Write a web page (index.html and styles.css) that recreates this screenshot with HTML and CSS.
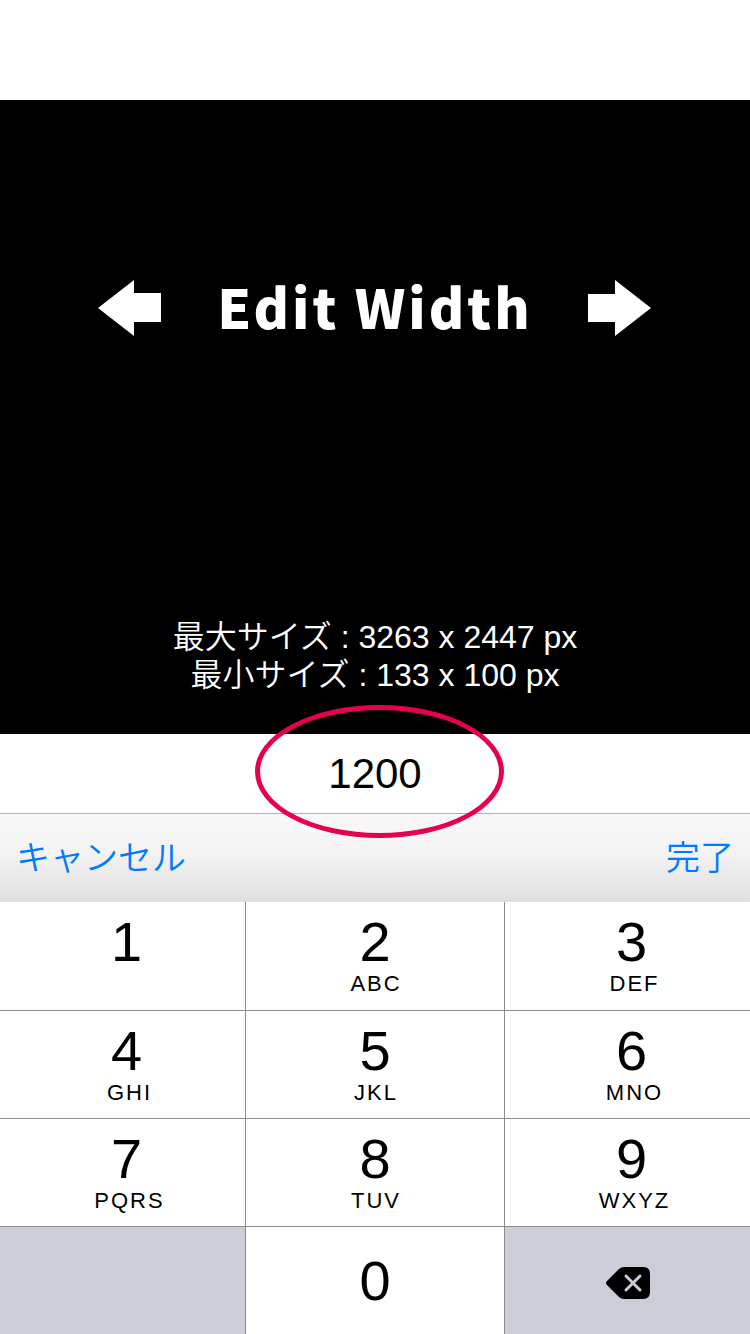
FILE: index.html
```html
<!DOCTYPE html>
<html lang="ja">
<head>
    <meta charset="UTF-8">
    <meta name="viewport" content="width=device-width, initial-scale=1.0">
    <title>Edit Width</title>
    <link rel="stylesheet" href="styles.css">
</head>
<body>
    <div class="screen">
        <main class="preview">
            <div class="title-row">
                <svg class="arrow" viewBox="0 0 64 56" aria-hidden="true"><path d="M0 28 L36 0 V13 H63 V42 H36 V56 Z"/></svg>
                <h1 class="title">Edit Width</h1>
                <svg class="arrow" viewBox="0 0 64 56" aria-hidden="true"><path d="M63 28 L27 0 V14 H0 V42 H27 V56 Z"/></svg>
            </div>
            <p class="size-info">
                最大サイズ : 3263 x 2447 px<br>
                最小サイズ : 133 x 100 px
            </p>
        </main>

        <div class="field">
            <input class="field-input" type="text" inputmode="numeric" value="1200" aria-label="Width">
            <span class="highlight"></span>
        </div>

        <div class="toolbar">
            <button class="toolbar-button" type="button">キャンセル</button>
            <button class="toolbar-button" type="button">完了</button>
        </div>

        <div class="keypad">
            <button class="key key-side" type="button"><span class="digit">1</span></button>
            <button class="key" type="button"><span class="digit">2</span><span class="letters">ABC</span></button>
            <button class="key key-side" type="button"><span class="digit">3</span><span class="letters">DEF</span></button>
            <button class="key key-side" type="button"><span class="digit">4</span><span class="letters">GHI</span></button>
            <button class="key" type="button"><span class="digit">5</span><span class="letters">JKL</span></button>
            <button class="key key-side" type="button"><span class="digit">6</span><span class="letters">MNO</span></button>
            <button class="key key-side" type="button"><span class="digit">7</span><span class="letters">PQRS</span></button>
            <button class="key" type="button"><span class="digit">8</span><span class="letters">TUV</span></button>
            <button class="key key-side" type="button"><span class="digit">9</span><span class="letters">WXYZ</span></button>
            <div class="key-blank"></div>
            <button class="key key-center" type="button"><span class="digit">0</span></button>
            <button class="key key-center key-delete" type="button" aria-label="Delete">
                <svg class="delete-icon" viewBox="0 0 44 32" aria-hidden="true">
                    <path d="M18 0 H37 Q44 0 44 7 V25 Q44 32 37 32 H18 Q15 32 13 30 L1 18 Q-1 16 1 14 L13 2 Q15 0 18 0 Z"/>
                    <path class="delete-cross" d="M20 9 L34 23 M34 9 L20 23"/>
                </svg>
            </button>
        </div>
    </div>
</body>
</html>
```
FILE: styles.css
```css
:root {
    --blue: #007aff;
    --pink: #e6004f;
    --key-line: #8c8c8c;
    --key-grey: #cbced6;
}

* {
    box-sizing: border-box;
}

body {
    margin: 0;
    background: #fff;
    color: #000;
    font-family: "Liberation Sans", "Noto Sans CJK JP", sans-serif;
}

button {
    margin: 0;
    padding: 0;
    border: none;
    background: none;
    color: inherit;
    font-family: inherit;
    cursor: pointer;
}

.screen {
    display: flex;
    flex-direction: column;
    min-height: 100vh;
    padding-top: 100px;
}

/* Preview area */
.preview {
    display: flex;
    flex: 1;
    flex-direction: column;
    justify-content: space-between;
    padding: 180px 20px 40px;
    background: #000;
    color: #fff;
}

.title-row {
    display: flex;
    align-items: center;
    justify-content: center;
    gap: 55px;
    height: 56px;
}

.arrow {
    width: 64px;
    height: 56px;
    fill: #fff;
}

.title {
    margin: 0;
    padding-bottom: 4px;
    font-family: "Noto Sans CJK JP", sans-serif;
    font-size: 54px;
    font-weight: 900;
    line-height: 52px;
    letter-spacing: 3px;
}

.size-info {
    margin: 0;
    font-size: 32px;
    font-weight: 350;
    line-height: 38px;
    text-align: center;
}

/* Width field */
.field {
    position: relative;
}

.field-input {
    display: block;
    width: 100%;
    height: 79px;
    padding: 0;
    border: none;
    outline: none;
    background: #fff;
    color: #000;
    font-family: inherit;
    font-size: 42px;
    text-align: center;
}

.highlight {
    position: absolute;
    top: -29px;
    left: calc(50% - 120px);
    width: 249px;
    height: 133px;
    border: 5px solid var(--pink);
    border-radius: 50%;
    pointer-events: none;
}

.toolbar {
    display: flex;
    align-items: center;
    justify-content: space-between;
    height: 89px;
    padding: 0 16px;
    border-top: 1px solid #b0b0b0;
    background: linear-gradient(#f8f8f8, #f3f3f3 45%, #dfdfdf);
}

.toolbar-button {
    color: var(--blue);
    font-size: 34px;
    font-weight: 350;
    line-height: 48px;
}

/* Keypad */
.keypad {
    display: grid;
    grid-template-columns: 245fr 258fr 245fr;
    grid-template-rows: 108px;
    grid-auto-rows: 107px;
    gap: 1px;
    background: var(--key-line);
}

.key {
    display: flex;
    flex-direction: column;
    align-items: center;
    padding-top: 12px;
    background: #fff;
}

.key-side {
    padding-left: 8px;
}

.digit {
    font-size: 56px;
    line-height: 56px;
}

.letters {
    padding-left: 2px;
    font-size: 22px;
    line-height: 28px;
    letter-spacing: 2px;
}

.key-side .letters {
    padding-left: 6px;
}

.key-center {
    justify-content: center;
    padding-top: 0;
}

.key-blank,
.key-delete {
    background: var(--key-grey);
}

.key-delete {
    padding-top: 4px;
}

.delete-icon {
    width: 44px;
    height: 32px;
}

.delete-cross {
    fill: none;
    stroke: var(--key-grey);
    stroke-width: 3;
    stroke-linecap: round;
}
```
